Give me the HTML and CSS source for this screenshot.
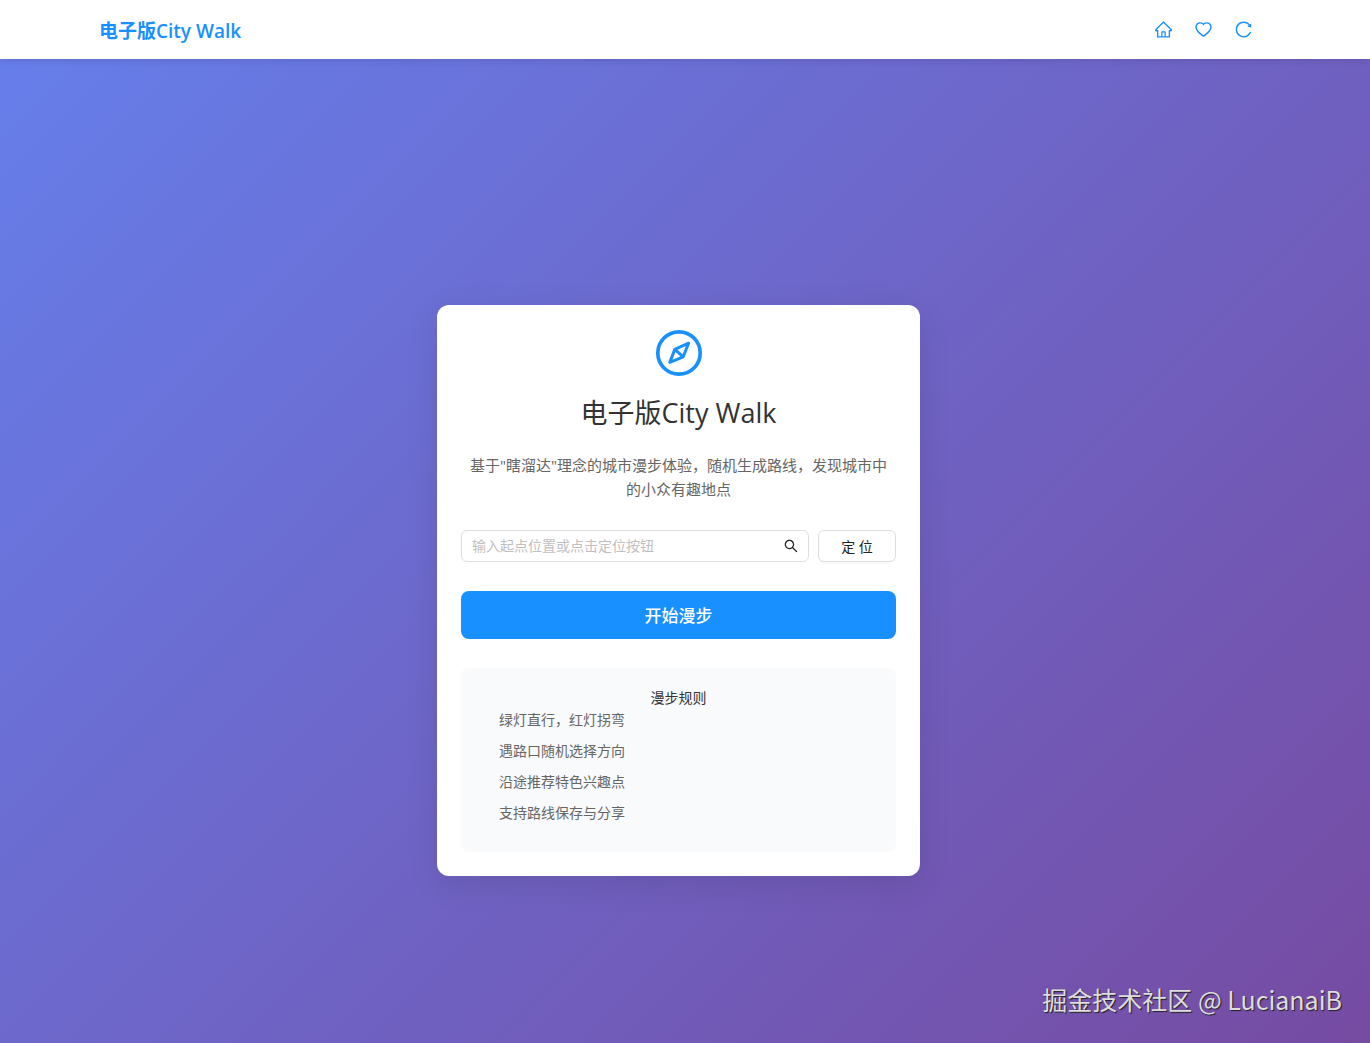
FILE: index.html
```html
<!DOCTYPE html>
<html lang="zh-CN">
<head>
    <meta charset="UTF-8">
    <meta name="viewport" content="width=device-width, initial-scale=1.0">
    <title>电子版City Walk</title>
    <link rel="stylesheet" href="styles.css">
</head>
<body>
<header class="header">
    <div class="header-inner">
        <a class="logo" href="#">电子版City Walk</a>
        <nav class="nav">
            <a href="#" aria-label="首页">
                <svg viewBox="64 64 896 896"><path d="M946.5 505L560.1 118.8l-25.9-25.9a31.5 31.5 0 00-44.4 0L77.5 505a63.9 63.9 0 00-18.8 46c.4 35.2 29.7 63.3 64.9 63.3h42.5V940h691.8V614.3h43.4c17.1 0 33.2-6.7 45.3-18.8a63.6 63.6 0 0018.7-45.3c0-17-6.7-33.1-18.8-45.2zM568 868H456V664h112v204zm217.9-325.7V868H632V640c0-22.1-17.9-40-40-40H432c-22.1 0-40 17.9-40 40v228H238.1V542.3h-96l370-369.7 23.1 23.1L882 542.3h-96.1z"/></svg>
            </a>
            <a href="#" aria-label="收藏">
                <svg viewBox="64 64 896 896"><path d="M923 283.6a260.04 260.04 0 00-56.9-82.8 264.4 264.4 0 00-84-55.5A265.34 265.34 0 00679.7 125c-49.3 0-97.4 13.5-139.2 39-10 6.1-19.5 12.8-28.5 20.1-9-7.3-18.5-14-28.5-20.1-41.8-25.5-89.9-39-139.2-39-35.5 0-69.9 6.8-102.4 20.3-31.4 13-59.7 31.7-84 55.5a258.44 258.44 0 00-56.9 82.8c-13.9 32.3-21 66.6-21 101.9 0 33.3 6.8 68 20.3 103.3 11.3 29.5 27.5 60.1 48.2 91 32.8 48.9 77.9 99.9 133.9 151.6 92.8 85.7 184.7 144.9 188.6 147.3l23.7 15.2c10.5 6.7 24 6.7 34.5 0l23.7-15.2c3.9-2.5 95.7-61.6 188.6-147.3 56-51.7 101.1-102.7 133.9-151.6 20.7-30.9 37-61.5 48.2-91 13.5-35.3 20.3-70 20.3-103.3.1-35.3-7-69.6-20.9-101.9zM512 814.8S156 586.7 156 385.5C156 283.6 240.3 201 344.3 201c73.1 0 136.5 40.8 167.7 100.4C543.2 241.8 606.6 201 679.7 201c104 0 188.3 82.6 188.3 184.5 0 201.2-356 429.3-356 429.3z"/></svg>
            </a>
            <a href="#" aria-label="刷新">
                <svg viewBox="64 64 896 896"><path d="M909.1 209.3l-56.4 44.1C775.8 155.1 656.2 92 521.9 92 290 92 102.3 279.5 102 511.5 101.7 743.7 289.8 932 521.9 932c181.3 0 335.8-115 394.6-276.1 1.5-4.2-.7-8.9-4.9-10.3l-56.7-19.5a8 8 0 00-10.1 4.8c-1.8 5-3.8 10-5.9 14.9-17.3 41-42.1 77.8-73.7 109.4A344.77 344.77 0 01655.9 829c-42.3 17.9-87.4 27-133.8 27-46.5 0-91.5-9.1-133.8-27A341.5 341.5 0 01279 755.2a342.16 342.16 0 01-73.7-109.4c-17.9-42.4-27-87.4-27-133.9s9.1-91.5 27-133.9c17.3-41 42.1-77.8 73.7-109.4 31.6-31.6 68.4-56.4 109.3-73.8 42.3-17.9 87.4-27 133.8-27 46.5 0 91.5 9.1 133.8 27a341.5 341.5 0 01109.3 73.8c9.9 9.9 19.2 20.4 27.8 31.4l-60.2 47a8 8 0 003 14.1l175.6 43c5 1.2 9.9-2.6 9.9-7.7l.8-180.9c-.1-6.6-7.8-10.3-13-6.2z"/></svg>
            </a>
        </nav>
    </div>
</header>
<main class="main">
    <div class="card">
        <svg class="compass" viewBox="0 0 48 48" aria-hidden="true">
            <circle cx="24" cy="24" r="21.2" stroke-width="3.7"/>
            <path d="M33.6 14.2L19.8 20.4 14.8 33.4 28.2 27.8zM19.8 20.4L28.2 27.8" stroke-width="3"/>
        </svg>
        <h1 class="title">电子版City Walk</h1>
        <p class="subtitle">基于"瞎溜达"理念的城市漫步体验，随机生成路线，发现城市中的小众有趣地点</p>
        <form class="start-form">
            <div class="location-row">
                <div class="search-box">
                    <input type="text" aria-label="起点位置" placeholder="输入起点位置或点击定位按钮">
                    <button type="button" class="search-btn" aria-label="搜索">
                        <svg viewBox="64 64 896 896"><path d="M909.6 854.5L649.9 594.8C690.2 542.7 712 479 712 412c0-80.2-31.3-155.4-87.9-212.1-56.6-56.7-132-87.9-212.1-87.9s-155.5 31.3-212.1 87.9C143.2 256.5 112 331.8 112 412c0 80.1 31.3 155.5 87.9 212.1C256.5 680.8 331.8 712 412 712c67 0 130.6-21.8 182.7-62l259.7 259.6a8.2 8.2 0 0011.6 0l43.6-43.5a8.2 8.2 0 000-11.6zM570.4 570.4C528 612.7 471.8 636 412 636s-116-23.3-158.4-65.6C211.3 528 188 471.8 188 412s23.3-116.1 65.6-158.4C296 211.3 352.2 188 412 188s116.1 23.2 158.4 65.6S636 352.2 636 412s-23.3 116.1-65.6 158.4z"/></svg>
                    </button>
                </div>
                <button type="button" class="locate-btn">定 位</button>
            </div>
            <button type="button" class="start-btn">开始漫步</button>
        </form>
        <section class="rules">
            <h2>漫步规则</h2>
            <ul>
                <li>绿灯直行，红灯拐弯</li>
                <li>遇路口随机选择方向</li>
                <li>沿途推荐特色兴趣点</li>
                <li>支持路线保存与分享</li>
            </ul>
        </section>
    </div>
</main>
<div class="watermark">掘金技术社区 @ LucianaiB</div>
</body>
</html>
```

FILE: styles.css
```css
* {
    box-sizing: border-box;
}
body {
    margin: 0;
    min-height: 100vh;
    display: flex;
    flex-direction: column;
    font-family: "Open Sans", "Noto Sans CJK SC", sans-serif;
    font-size: 14px;
    color: #333;
}
button, input {
    font: inherit;
}
svg {
    display: block;
    fill: currentColor;
}

/* Header */
.header {
    position: relative;
    z-index: 1;
    background: #fff;
    box-shadow: 0 2px 8px rgba(0, 0, 0, 0.1);
    padding-right: 12px;
}
.header-inner {
    max-width: 1160px;
    height: 59px;
    margin: 0 auto;
    display: flex;
    align-items: center;
    justify-content: space-between;
}
.logo {
    color: #1890ff;
    font-size: 19px;
    font-weight: 600;
    text-decoration: none;
}
.nav {
    display: flex;
    gap: 8px;
}
.nav a {
    width: 32px;
    height: 32px;
    display: flex;
    align-items: center;
    justify-content: center;
    color: #1890ff;
}
.nav svg {
    width: 17px;
    height: 17px;
}

/* Start card */
.main {
    flex: 1;
    display: flex;
    align-items: center;
    justify-content: center;
    padding: 98px 33px 20px 20px;
    background: linear-gradient(135deg, #667eea 0%, #764ba2 100%);
}
.card {
    width: 100%;
    max-width: 483px;
    padding: 24px;
    background: #fff;
    border-radius: 12px;
    box-shadow: 0 8px 32px rgba(0, 0, 0, 0.1);
    text-align: center;
}
.compass {
    width: 48px;
    height: 48px;
    margin: 0 auto;
    fill: none;
    stroke: #1890ff;
    stroke-linejoin: round;
}
.title {
    margin: 16px 0 20px;
    font-size: 27px;
    font-weight: 400;
    line-height: 40px;
}
.subtitle {
    margin: 0 0 29px;
    padding: 0 4px;
    color: #666;
    font-size: 15px;
    line-height: 24px;
}
.location-row {
    display: flex;
    gap: 9px;
    margin-bottom: 29px;
}
.search-box {
    flex: 1;
    display: flex;
    height: 32px;
    border: 1px solid #dedede;
    border-radius: 6px;
}
.search-box input {
    flex: 1;
    min-width: 0;
    padding: 0 10px;
    border: 0;
    outline: 0;
    background: none;
}
.search-box input::placeholder {
    color: #bfbfbf;
}
.search-btn {
    padding: 0 10px;
    border: 0;
    background: none;
    color: #222;
    cursor: pointer;
}
.search-btn svg {
    width: 14px;
    height: 14px;
}
.locate-btn {
    width: 78px;
    height: 32px;
    padding: 0;
    border: 1px solid #dedede;
    border-radius: 6px;
    background: #fff;
    box-shadow: 0 2px 0 rgba(0, 0, 0, 0.02);
    color: #222;
    cursor: pointer;
}
.start-btn {
    display: block;
    width: 100%;
    height: 48px;
    border: 0;
    border-radius: 8px;
    background: #1890ff;
    color: #fff;
    font-size: 17px;
    font-weight: 500;
    cursor: pointer;
}
.rules {
    margin-top: 29px;
    padding: 19px;
    border-radius: 8px;
    background: #f9fafb;
}
.rules h2 {
    margin: 0;
    font-size: 14px;
    font-weight: 400;
    line-height: 22px;
}
.rules ul {
    margin: 0;
    padding: 0 0 0 19px;
    list-style: none;
    color: #666;
    text-align: left;
}
.rules li {
    margin-bottom: 9px;
    line-height: 22px;
}

.watermark {
    position: absolute;
    right: 28px;
    bottom: 26px;
    z-index: 2;
    color: #ddd;
    font-family: "Noto Sans CJK SC", sans-serif;
    font-size: 25px;
    line-height: 36px;
    text-shadow: 1px 1px 1px #222;
}
```
